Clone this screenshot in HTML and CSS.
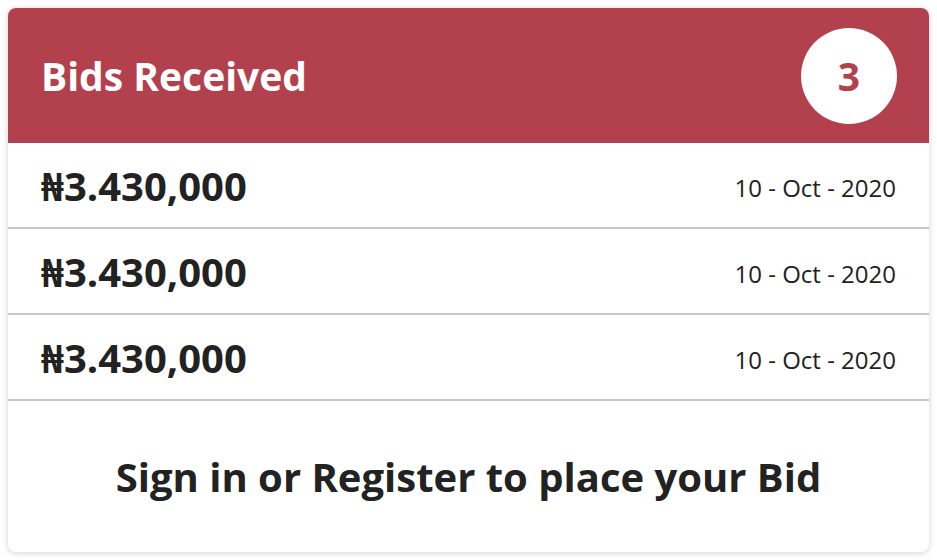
FILE: index.html
```html
<!DOCTYPE html>
<html>
<head>
<meta charset="utf-8">
<link rel="stylesheet" href="styles.css">
</head>
<body>
<div class="card">
  <div class="card-header">
    <h2 class="title">Bids Received</h2>
    <div class="count">3</div>
  </div>
  <div class="bid-row">
    <span class="amount">₦3.430,000</span>
    <span class="date">10 - Oct - 2020</span>
  </div>
  <div class="bid-row">
    <span class="amount">₦3.430,000</span>
    <span class="date">10 - Oct - 2020</span>
  </div>
  <div class="bid-row">
    <span class="amount">₦3.430,000</span>
    <span class="date">10 - Oct - 2020</span>
  </div>
  <div class="card-footer">Sign in or Register to place your Bid</div>
</div>
</body>
</html>
```
FILE: styles.css
```css
* { box-sizing: border-box; }
html, body { margin: 0; padding: 0; background: #ffffff; }
body { padding: 8px; font-family: "Open Sans", "Noto Sans", sans-serif; color: #222222; }
.card {
  width: 921px;
  height: 544px;
  background: #ffffff;
  border-radius: 8px;
  box-shadow: 0 1px 6px rgba(0,0,0,0.18);
  overflow: hidden;
  display: flex;
  flex-direction: column;
}
.card-header {
  height: 135px;
  background: #b3404d;
  display: flex;
  align-items: center;
  justify-content: space-between;
  padding: 0 32px 0 33px;
}
.title {
  margin: 0;
  color: #ffffff;
  font-size: 39px;
  font-weight: 700;
  line-height: 1;
}
.count {
  width: 96px;
  height: 96px;
  border-radius: 50%;
  background: #ffffff;
  color: #b3404d;
  font-size: 39px;
  font-weight: 700;
  display: flex;
  align-items: center;
  justify-content: center;
}
.bid-row {
  height: 86px;
  border-bottom: 2px solid #c8c8c8;
  display: flex;
  align-items: center;
  justify-content: space-between;
  padding: 2px 33px 0 33px;
}
.amount { font-size: 40px; font-weight: 700; color: #222222; line-height: 1; }
.date { font-size: 24px; color: #222222; line-height: 1; padding-top: 4px; }
.card-footer {
  flex: 1;
  display: flex;
  align-items: center;
  justify-content: center;
  font-size: 40px;
  font-weight: 700;
  color: #222222;
}
```
